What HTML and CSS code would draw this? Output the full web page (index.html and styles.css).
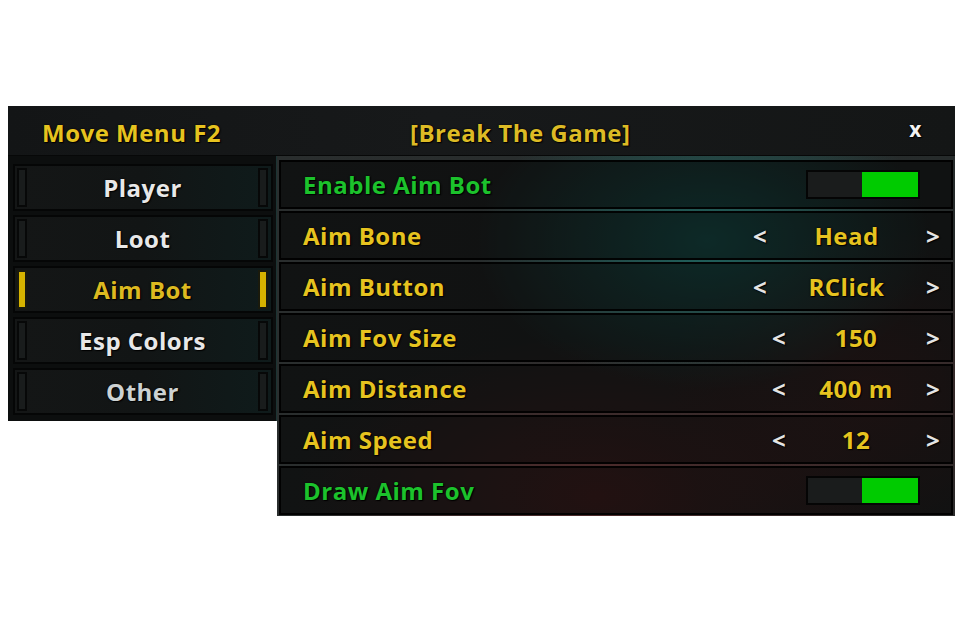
FILE: index.html
```html
<!DOCTYPE html>
<html>
<head>
<meta charset="utf-8">
<link rel="stylesheet" href="styles.css">
</head>
<body>
<div class="window">
  <div class="header">
    <span class="title">Move Menu F2</span>
    <span class="subtitle">[Break The Game]</span>
    <span class="close">x</span>
  </div>
  <div class="body">
    <div class="tabs">
      <div class="tab"><span class="bar"></span><span class="tab-label">Player</span><span class="bar"></span></div>
      <div class="tab"><span class="bar"></span><span class="tab-label">Loot</span><span class="bar"></span></div>
      <div class="tab active"><span class="bar"></span><span class="tab-label">Aim Bot</span><span class="bar"></span></div>
      <div class="tab"><span class="bar"></span><span class="tab-label">Esp Colors</span><span class="bar"></span></div>
      <div class="tab dim"><span class="bar"></span><span class="tab-label">Other</span><span class="bar"></span></div>
    </div>
    <div class="options">
      <div class="row">
        <span class="label green">Enable Aim Bot</span>
        <span class="toggle"><span class="knob"></span></span>
      </div>
      <div class="row">
        <span class="label">Aim Bone</span>
        <span class="picker wide"><span class="arrow">&lt;</span><span class="value">Head</span><span class="arrow">&gt;</span></span>
      </div>
      <div class="row">
        <span class="label">Aim Button</span>
        <span class="picker wide"><span class="arrow">&lt;</span><span class="value">RClick</span><span class="arrow">&gt;</span></span>
      </div>
      <div class="row">
        <span class="label">Aim Fov Size</span>
        <span class="picker"><span class="arrow">&lt;</span><span class="value">150</span><span class="arrow">&gt;</span></span>
      </div>
      <div class="row">
        <span class="label">Aim Distance</span>
        <span class="picker"><span class="arrow">&lt;</span><span class="value">400 m</span><span class="arrow">&gt;</span></span>
      </div>
      <div class="row">
        <span class="label">Aim Speed</span>
        <span class="picker"><span class="arrow">&lt;</span><span class="value">12</span><span class="arrow">&gt;</span></span>
      </div>
      <div class="row">
        <span class="label green">Draw Aim Fov</span>
        <span class="toggle"><span class="knob"></span></span>
      </div>
    </div>
  </div>
</div>
</body>
</html>
```
FILE: styles.css
```css
html, body {
  margin: 0;
  padding: 0;
  background: #ffffff;
}
body {
  font-family: "Open Sans", "DejaVu Sans", sans-serif;
  font-weight: 700;
  font-size: 24px;
  letter-spacing: 0.5px;
}
.window {
  margin: 106px 0 0 8px;
  width: 947px;
}
.header {
  height: 50px;
  box-sizing: border-box;
  padding-top: 3px;
  display: flex;
  align-items: center;
  background: linear-gradient(90deg, #131516 0%, #17191a 45%, #141616 100%);
  border-bottom: 1px solid #070808;
  color: #e6c31f;
  text-shadow: 0 0 2px #000, 1px 1px 1px #000;
}
.title {
  padding-left: 34px;
  box-sizing: border-box;
  width: 402px;
}
.subtitle {
  color: #ddbb25;
}
.close {
  margin-left: auto;
  margin-right: 33px;
  color: #f2f2f2;
  font-size: 21px;
  line-height: 1;
  margin-top: -6px;
}
.body {
  display: flex;
  align-items: flex-start;
}
.tabs {
  width: 269px;
  box-sizing: border-box;
  padding: 8px 3px 6px 5px;
  display: flex;
  flex-direction: column;
  gap: 4px;
  background: #0c0e0e;
  border-right: 1px solid #1c3433;
}
.tab {
  height: 47px;
  box-sizing: border-box;
  border: 2px solid #050606;
  background: linear-gradient(90deg, #141616 0%, #121515 50%, #0f1b1b 100%);
  display: flex;
  align-items: center;
  padding: 0 3px 0 2px;
}
.bar {
  width: 10px;
  height: 39px;
  box-sizing: border-box;
  border: 2px solid #070808;
  background: #191c1c;
}
.tab.active .bar {
  background: #d6b300;
  border-color: #1a1a0c;
}
.tab-label {
  flex: 1;
  text-align: center;
  color: #e8e8e8;
  text-shadow: 0 0 2px #000, 1px 1px 1px #000;
}
.tab.active .tab-label {
  color: #dcb920;
}
.tab.dim .tab-label {
  color: #cdd2d2;
}
.options {
  flex: 1;
  box-sizing: border-box;
  padding: 4px 2px 1px 2px;
  display: flex;
  flex-direction: column;
  gap: 2px;
  background:
    radial-gradient(ellipse 230px 150px at 430px 85px, rgba(30, 110, 104, 0.85), rgba(30, 110, 104, 0) 100%),
    radial-gradient(ellipse 300px 160px at 320px 340px, rgba(110, 40, 40, 0.6), rgba(110, 40, 40, 0) 100%),
    radial-gradient(ellipse 200px 170px at 590px 240px, rgba(100, 40, 40, 0.45), rgba(100, 40, 40, 0) 100%),
    linear-gradient(90deg, #2a2e2e 0%, #262b2b 100%);
}
.row {
  height: 49px;
  box-sizing: border-box;
  border: 2px solid rgba(0, 0, 0, 0.9);
  background: rgba(0, 0, 0, 0.58);
  display: flex;
  align-items: center;
  padding: 0 10px 0 22px;
  color: #e6c31f;
  text-shadow: 0 0 2px #000, 1px 1px 1px #000;
}
.label {
  flex: 1;
}
.label.green {
  color: #1cc22c;
}
.picker {
  width: 170px;
  display: flex;
  align-items: center;
}
.picker.wide {
  width: 189px;
}
.arrow {
  color: #e4e4e4;
  width: 16px;
  text-align: center;
}
.value {
  flex: 1;
  text-align: center;
  color: #e6c31f;
}
.toggle {
  width: 114px;
  height: 29px;
  box-sizing: border-box;
  border: 2px solid #050505;
  background: #1a1c1c;
  margin-right: 21px;
  display: flex;
  justify-content: flex-end;
}
.knob {
  width: 56px;
  height: 100%;
  background: #00cb00;
}
```
